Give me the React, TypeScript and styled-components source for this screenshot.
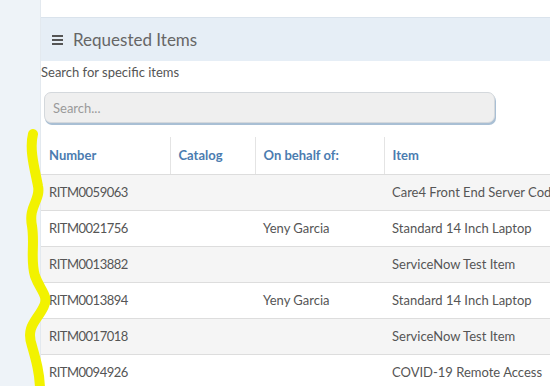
import { createGlobalStyle, styled } from "styled-components";

const GlobalStyle = createGlobalStyle`
  html, body {
    margin: 0;
    padding: 0;
    background: #ffffff;
    font-family: Lato, "Open Sans", sans-serif;
  }
`;

type Row = {
  number: string;
  catalog: string;
  behalf: string;
  item: string;
};

const rows: Row[] = [
  { number: "RITM0059063", catalog: "", behalf: "", item: "Care4 Front End Server Code" },
  { number: "RITM0021756", catalog: "", behalf: "Yeny Garcia", item: "Standard 14 Inch Laptop" },
  { number: "RITM0013882", catalog: "", behalf: "", item: "ServiceNow Test Item" },
  { number: "RITM0013894", catalog: "", behalf: "Yeny Garcia", item: "Standard 14 Inch Laptop" },
  { number: "RITM0017018", catalog: "", behalf: "", item: "ServiceNow Test Item" },
  { number: "RITM0094926", catalog: "", behalf: "", item: "COVID-19 Remote Access" },
];

const Page = styled.div`
  position: relative;
  display: flex;
  width: 550px;
  height: 386px;
  overflow: hidden;
`;

const Sidebar = styled.div`
  flex: 0 0 40px;
  background: #eef3f8;
  border-right: 1px solid #e3e9ef;
`;

const Main = styled.div`
  flex: 1;
  padding-top: 17px;
  min-width: 0;
`;

const PanelHeader = styled.div`
  display: flex;
  align-items: center;
  gap: 10px;
  height: 43px;
  padding-left: 11px;
  background: #e6eef6;
  border-top: 1px solid #dae3ec;
  color: #666;
  font-size: 17px;
`;

const MenuIcon = styled.span`
  display: flex;
  flex-direction: column;
  gap: 2px;
  width: 11px;

  & > i {
    display: block;
    height: 2px;
    background: #555;
  }
`;

const Hint = styled.div`
  margin-top: 4px;
  color: #555;
  font-size: 13px;
  line-height: 15px;
`;

const SearchWrap = styled.div`
  padding: 12px 0 0 3px;
`;

const SearchInput = styled.input`
  box-sizing: border-box;
  width: 451px;
  height: 31px;
  padding: 0 8px;
  border: 1px solid #d4d8dc;
  border-radius: 7px;
  background: #efefef;
  box-shadow: 1px 2px 0 #a9bfd4;
  font-family: inherit;
  font-size: 13px;
  color: #555;
  outline: none;

  &::placeholder {
    color: #9a9a9a;
  }
`;

const Table = styled.table`
  margin-top: 14px;
  width: 560px;
  border-collapse: collapse;
  table-layout: fixed;
  white-space: nowrap;
`;

const Th = styled.th<{ $w: number }>`
  box-sizing: border-box;
  width: ${({ $w }) => $w}px;
  height: 37px;
  padding: 0 8px;
  text-align: left;
  font-size: 13px;
  font-weight: 700;
  color: #4b7cb0;
  border-bottom: 1px solid #dddddd;
  border-left: 1px solid #e4e4e4;

  &:first-child {
    border-left: none;
  }
`;

const Tr = styled.tr<{ $striped: boolean }>`
  background: ${({ $striped }) => ($striped ? "#f5f5f5" : "#ffffff")};
`;

const Td = styled.td`
  height: 35px;
  padding: 0 8px;
  font-size: 13px;
  color: #555;
  border-bottom: 1px solid #dddddd;
  overflow: hidden;
`;

const NumberText = styled.span`
  letter-spacing: -0.5px;
`;

const Marker = styled.svg`
  position: absolute;
  left: 0;
  top: 0;
  pointer-events: none;
`;

export default function App() {
  return (
    <Page>
      <GlobalStyle />
      <Sidebar />
      <Main>
        <PanelHeader>
          <MenuIcon>
            <i />
            <i />
            <i />
          </MenuIcon>
          Requested Items
        </PanelHeader>
        <Hint>Search for specific items</Hint>
        <SearchWrap>
          <SearchInput placeholder="Search..." />
        </SearchWrap>
        <Table>
          <thead>
            <tr>
              <Th $w={129}>Number</Th>
              <Th $w={85}>Catalog</Th>
              <Th $w={129}>On behalf of:</Th>
              <Th $w={217}>Item</Th>
            </tr>
          </thead>
          <tbody>
            {rows.map((r, i) => (
              <Tr key={r.number} $striped={i % 2 === 0}>
                <Td>
                  <NumberText>{r.number}</NumberText>
                </Td>
                <Td>{r.catalog}</Td>
                <Td>{r.behalf}</Td>
                <Td>{r.item}</Td>
              </Tr>
            ))}
          </tbody>
        </Table>
      </Main>
      <Marker width="550" height="386" viewBox="0 0 550 386">
        <path
          d="M33 134 C29 150, 35 170, 38 186 C41 200, 28 206, 32 226 C35 245, 30 260, 35 276 C40 290, 49 296, 44 306 C38 320, 25 326, 32 346 C36 360, 40 374, 40 390"
          fill="none"
          stroke="#f2f200"
          strokeWidth="10"
          strokeLinecap="round"
        />
      </Marker>
    </Page>
  );
}
